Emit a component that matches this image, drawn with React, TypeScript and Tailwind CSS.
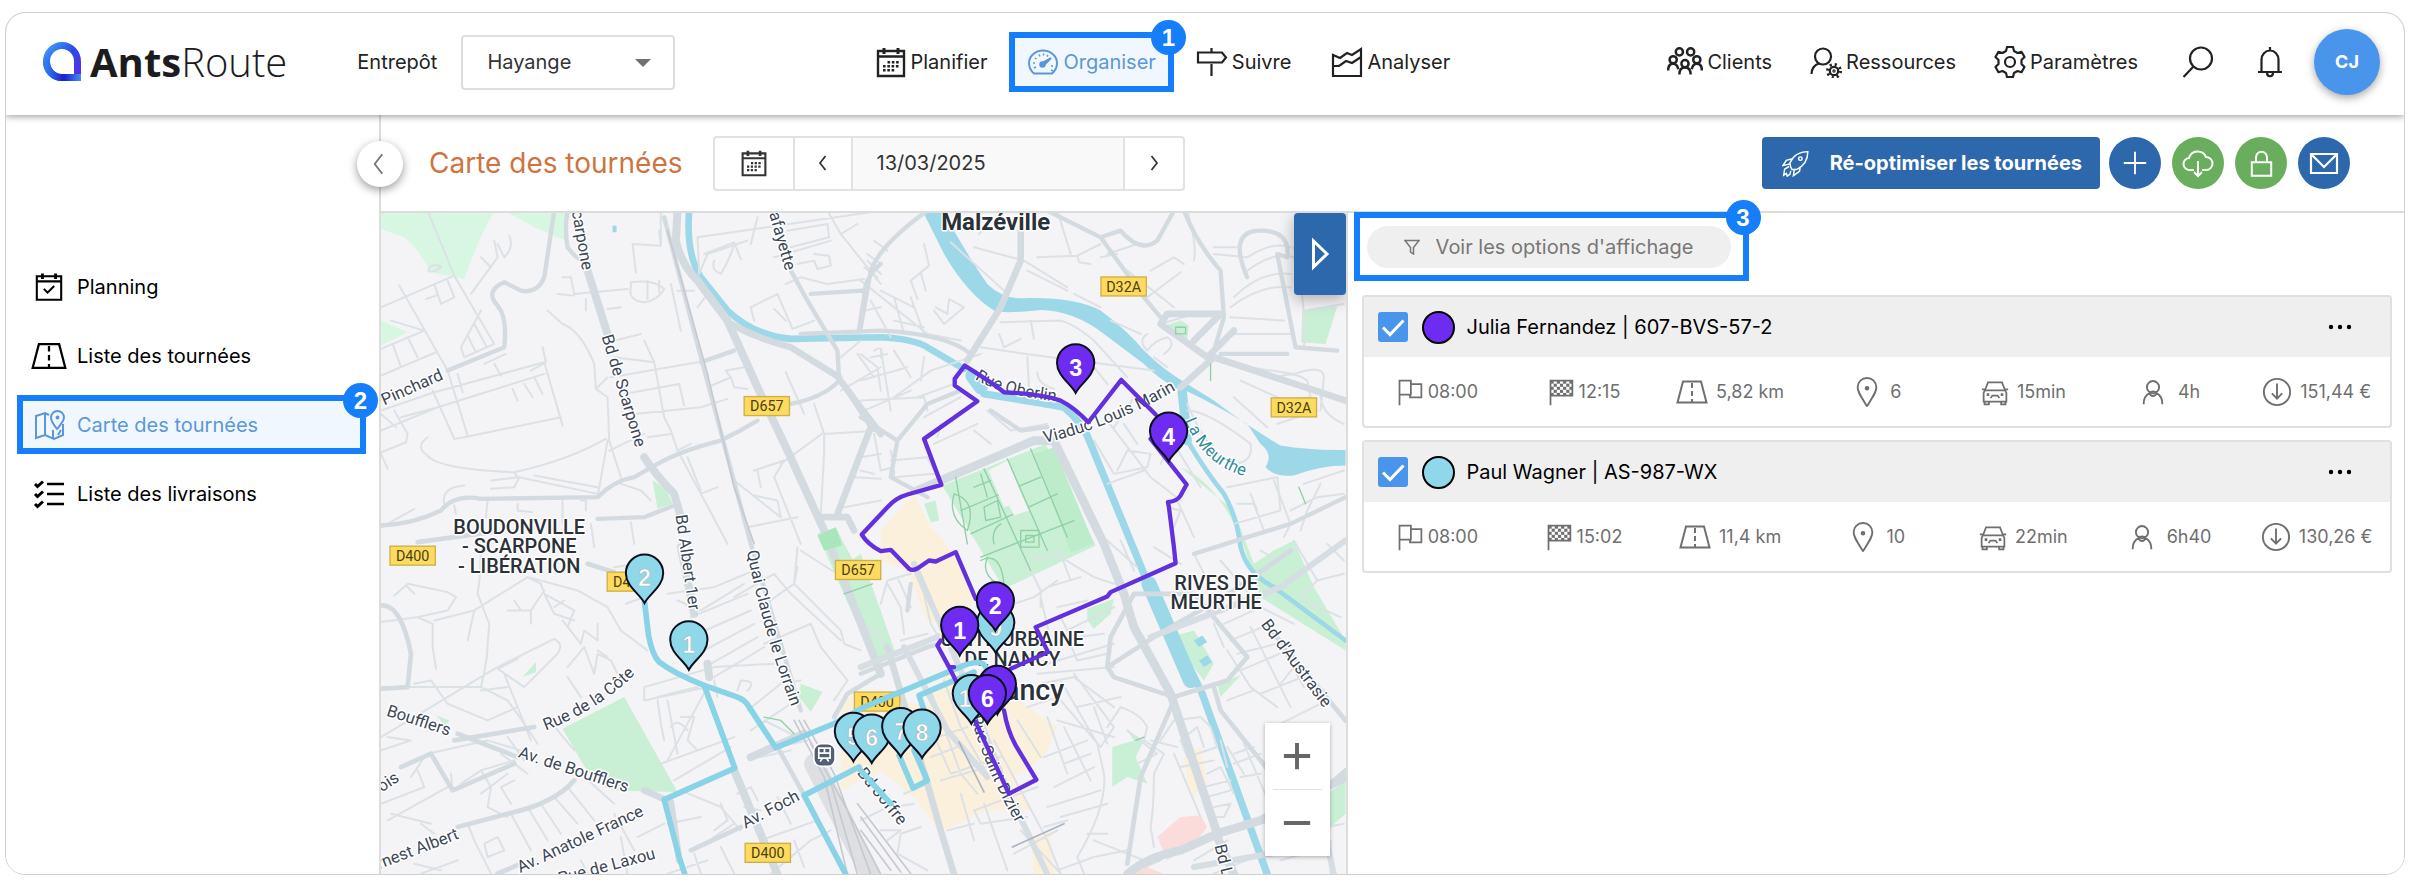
import React from "react";

type IconProps = { className?: string };

function Icon({ className = "", children, box = 32, width = 2 }: { className?: string; children: React.ReactNode; box?: number; width?: number }) {
  return (
    <svg viewBox={`0 0 ${box} ${box}`} className={`shrink-0 ${className}`} fill="none" stroke="currentColor" strokeWidth={width} aria-hidden="true">
      {children}
    </svg>
  );
}

function CalendarGridIcon({ className }: IconProps) {
  return (
    <Icon className={className}>
      <path d="M3 5h26v25H3zM3 10.500h26" strokeWidth="2.400" />
      <path d="M9 2v6M23 2v6" strokeWidth="3" />
      <path d="M12.500 16.200h13M8 20.200h17M8 24.200h12" strokeWidth="2.600" strokeDasharray="2.600 1.700" />
    </Icon>
  );
}

function GaugeIcon({ className }: IconProps) {
  return (
    <Icon className={className}>
      <path d="M7 27.500h18c3-2.500 5-6.500 5-10.500a14 12.500 0 0 0-28 0c0 4 2 8 5 10.500z" />
      <path d="M15 17l9-5-7 7z" fill="currentColor" />
      <circle cx="15.500" cy="18.500" r="2.200" fill="currentColor" />
      <path d="M6 17h2M24 20h2M7 22l2-1M24 24l2 1M8 12l1.500 1M12 8.500l1 2M16.500 7.500v2M21 9l-1 1.500" strokeWidth="1.500" />
    </Icon>
  );
}

function SignIcon({ className }: IconProps) {
  return (
    <Icon className={className} width={2.2}>
      <path d="M2 6.500h24l4 5-4 5H2zM15.500 2v4M15.500 18v12" />
    </Icon>
  );
}

function ChartIcon({ className }: IconProps) {
  return (
    <Icon className={className} width={2.2}>
      <path d="M2 9v21h28V3l-9 6-5-2-7 5zM2 20l6 0 7-5 6 2 9-6" />
    </Icon>
  );
}

function PeopleIcon({ className }: IconProps) {
  return (
    <Icon className={className} width={2.2}>
      <circle cx="11" cy="7" r="3.200" />
      <circle cx="21" cy="7" r="3.200" />
      <circle cx="5.500" cy="14" r="3.200" />
      <circle cx="26.500" cy="14" r="3.200" />
      <circle cx="16" cy="17.500" r="3.200" />
      <path d="M1 23.500c0-4 2-6 4.500-6s4 2 4.500 5M31 23.500c0-4-2-6-4.500-6s-4 2-4.500 5M11 27c0-4 2-6.200 5-6.200s5 2.200 5 6.200" />
    </Icon>
  );
}

function UserGearIcon({ className }: IconProps) {
  return (
    <Icon className={className} width={2.2}>
      <circle cx="13" cy="10.500" r="8" />
      <path d="M1.500 28c0-5 3-9.500 7.500-10.500" />
      <circle cx="24" cy="25" r="4.200" />
      <circle cx="24" cy="25" r="6.500" strokeDasharray="2.100 3" strokeWidth="3" />
      <circle cx="24" cy="25" r="0.600" />
    </Icon>
  );
}

function GearIcon({ className }: IconProps) {
  return (
    <Icon className={className} width={2.2}>
      <circle cx="16" cy="16" r="5" />
      <path strokeLinejoin="round" d="M13 1h6l1 4 3.500 2 4-1.200 3 5.200-3 3v4l3 3-3 5.200-4-1.200-3.500 2-1 4h-6l-1-4-3.500-2-4 1.200-3-5.200 3-3v-4l-3-3 3-5.200 4 1.200 3.500-2z" />
    </Icon>
  );
}

function SearchIcon({ className }: IconProps) {
  return (
    <Icon className={className} width={2.2}>
      <circle cx="19" cy="12.500" r="11" />
      <path d="M11.500 20.500L1.500 31" />
    </Icon>
  );
}

function BellIcon({ className }: IconProps) {
  return (
    <Icon className={className} width={2.2}>
      <path d="M4 26h24M7.500 26V13.500a8.500 9 0 0 1 17 0V26M16 1v3M13 26.500c0 5 6 5 6 0" />
    </Icon>
  );
}

function RocketIcon({ className }: IconProps) {
  return (
    <Icon className={className} width={1.7}>
      <path d="M10 21l-1-5C13 7 20 3 29.500 3c0 9-4 16-13 20.500l-5 0zM12 11l-7 2-4 6 8-2M21 19.500l-1 6-7 5 1-7M8 20l-5 3-1 7 3-2 1 3 3-2 1-4" />
      <circle cx="21" cy="11" r="2" />
    </Icon>
  );
}

function CloudIcon({ className }: IconProps) {
  return (
    <Icon className={className}>
      <path d="M12 23H8a6 6 0 0 1-1-12 9 9 0 0 1 17-1 6.500 6.500 0 0 1 0 13h-4M16 14v14M12 25l4 4 4-4" />
    </Icon>
  );
}

function LockIcon({ className }: IconProps) {
  return (
    <Icon className={className} width={2.4}>
      <path d="M4.500 14.500h23v16h-23zM9.500 14V9a6.500 7 0 0 1 13 0v5" />
    </Icon>
  );
}

function MailIcon({ className }: IconProps) {
  return (
    <Icon className={className} width={2.2}>
      <path d="M3 7h26v19H3zM3.500 7.500L16 20 28.500 7.500" />
    </Icon>
  );
}

function PlanningIcon({ className }: IconProps) {
  return (
    <Icon className={className} width={2.2}>
      <path d="M3 4.500h26v25H3zM3 10h26M10.500 18l4 4 7-7" />
      <path d="M9 1.500v6M23 1.500v6" strokeWidth="3" />
    </Icon>
  );
}

function RoadIcon({ className }: IconProps) {
  return (
    <Icon className={className}>
      <path d="M7 5.500h18l5.500 21h-29z" />
      <path d="M16 7v19" strokeDasharray="5 3" />
    </Icon>
  );
}

function MapPinIcon({ className }: IconProps) {
  return (
    <Icon className={className}>
      <path d="M16 6l-4-2-9 3v22l9-3 9 4 9-4V15M12 4v22M24 20c-4-5-6-8-6-11.500a6.500 6.500 0 0 1 13 0C31 12 28 15 24 20zM20 21v8M25 26l3-5" />
      <circle cx="24.500" cy="8.500" r="1" />
    </Icon>
  );
}

function ChecklistIcon({ className }: IconProps) {
  return (
    <Icon className={className} width={2.4}>
      <path d="M14 6h17M14 16h17M14 26h17" />
      <path d="M2 6l2.500 2.500L10 3.500M2 16l2.500 2.500L10 13.500M2 26l2.500 2.500L10 23.500" strokeWidth="3" />
    </Icon>
  );
}

function FlagIcon({ className }: IconProps) {
  return (
    <Icon className={className}>
      <path d="M4 31V3h13v16H4M17 7h12v15H16v-3" />
    </Icon>
  );
}

function FinishIcon({ className }: IconProps) {
  const cells: [number, number][] = [];
  for (let r = 0; r < 5; r++) for (let c = 0; c < 7; c++) if ((r + c) % 2 === 0) cells.push([c, r]);
  return (
    <Icon className={className}>
      <path d="M4 31V2M4 3h25v17H4" />
      {cells.map(([c, r]) => (
        <rect key={`${c}-${r}`} x={4 + c * 3.6} y={3 + r * 3.5} width="3.600" height="3.500" fill="currentColor" stroke="none" />
      ))}
    </Icon>
  );
}

function PlaceIcon({ className }: IconProps) {
  return (
    <Icon className={className}>
      <path d="M16 31C9 20 6 16 6 11a10 10 0 0 1 20 0c0 5-3 9-10 20z" />
      <circle cx="16" cy="12" r="1.500" fill="currentColor" />
    </Icon>
  );
}

function CarIcon({ className }: IconProps) {
  return (
    <Icon className={className}>
      <path d="M8 5h16l3.500 9H4.500zM1 13h4M27 13h4M4.500 14L3 17v10h26V17l-1.500-3M4 27v3h5v-3M23 27v3h5v-3M11 23l2-3h6l2 3" />
      <path d="M6.500 19h3M22.500 19h3" strokeWidth="3" />
    </Icon>
  );
}

function PersonIcon({ className }: IconProps) {
  return (
    <Icon className={className} width={2.3}>
      <circle cx="16" cy="10" r="7.500" />
      <path d="M4.500 31c0-7 3-11.500 7.500-13.500 1 4.500 7 4.500 8 0 4.500 2 7.500 6.500 7.500 13.500M11.500 17.500c2-3 7-3 9 0" />
    </Icon>
  );
}

function CostIcon({ className }: IconProps) {
  return (
    <Icon className={className}>
      <circle cx="16" cy="16" r="14" />
      <path d="M16 7v16M10.500 17.500L16 23l5.500-5.500" />
    </Icon>
  );
}

function Badge({ children }: { children: React.ReactNode }) {
  return (
    <span className="absolute -right-[18px] -top-[18px] z-10 flex h-[35px] w-[35px] items-center justify-center rounded-full bg-[#157efb] font-['Liberation_Sans',sans-serif] text-2xl font-bold text-white">
      {children}
    </span>
  );
}

function NavLink({ icon, label, badge }: { icon: React.ReactNode; label: string; badge?: string }) {
  return (
    <a
      href="#"
      className={`relative flex h-[60px] items-center gap-1 border-[6px] px-3 ${badge ? "border-[#157efb] bg-[#f0f7fe] text-[#5b97d8]" : "border-transparent"}`}
    >
      {icon}
      {label}
      {badge && <Badge>{badge}</Badge>}
    </a>
  );
}

function Header() {
  return (
    <header className="relative z-20 flex h-[102px] items-center justify-between rounded-t-[20px] bg-white pb-1 pl-9 pr-6 shadow-[0_2px_6px_rgba(0,0,0,0.35)]">
      <div className="flex items-center">
        <a href="#" className="flex items-center gap-2 font-['Open_Sans',sans-serif] text-[40px] leading-none text-[#1c1c1e]">
          <svg viewBox="0 0 40 40" className="h-10 w-10" aria-hidden="true">
            <defs>
              <linearGradient id="logo" x1="0" y1="0" x2="1" y2="1">
                <stop offset="0" stopColor="#3f9ff5" />
                <stop offset="0.500" stopColor="#2a4be8" />
                <stop offset="1" stopColor="#5a2be8" />
              </linearGradient>
              <linearGradient id="logoLow" x1="0" y1="0" x2="1" y2="0">
                <stop offset="0" stopColor="#2f7bf0" />
                <stop offset="0.500" stopColor="#1b1fd0" />
                <stop offset="1" stopColor="#4a8cf0" />
              </linearGradient>
            </defs>
            <path d="M35.500 35.500V19.500A15.500 16 0 1 0 20 35.500" fill="none" stroke="url(#logo)" strokeWidth="7" />
            <path d="M4.500 20A15.500 15.500 0 0 0 20 35.500H39" fill="none" stroke="url(#logoLow)" strokeWidth="7" />
          </svg>
          <span>
            <span className="font-bold">Ants</span>
            <span className="font-light">Route</span>
          </span>
        </a>
        <label htmlFor="depot" className="ml-[70px] mr-6">
          Entrepôt
        </label>
        <div className="relative">
          <select id="depot" className="h-[55px] w-[214px] appearance-none rounded border-2 border-[#dedede] bg-white pl-6 text-[#333]">
            <option>Hayange</option>
          </select>
          <svg viewBox="0 0 16 8" className="pointer-events-none absolute right-6 top-6 h-2 w-4" aria-hidden="true">
            <path d="M0 0h16L8 8z" fill="#707070" />
          </svg>
        </div>
      </div>
      <nav className="flex items-center gap-1">
        <NavLink icon={<CalendarGridIcon className="h-8 w-8" />} label="Planifier" />
        <NavLink icon={<GaugeIcon className="h-8 w-8" />} label="Organiser" badge="1" />
        <NavLink icon={<SignIcon className="h-8 w-8" />} label="Suivre" />
        <NavLink icon={<ChartIcon className="h-8 w-8" />} label="Analyser" />
      </nav>
      <div className="flex items-center gap-[2px]">
        <NavLink icon={<PeopleIcon className="h-9 w-9" />} label="Clients" />
        <NavLink icon={<UserGearIcon className="h-8 w-8" />} label="Ressources" />
        <NavLink icon={<GearIcon className="h-8 w-8" />} label="Paramètres" />
        <button aria-label="Rechercher" className="ml-6">
          <SearchIcon className="h-8 w-8" />
        </button>
        <button aria-label="Notifications" className="ml-[38px]">
          <BellIcon className="h-8 w-8" />
        </button>
        <button className="ml-[26px] h-[66px] w-[66px] rounded-full bg-[#4a95ec] text-lg font-bold text-white shadow-[0_3px_8px_rgba(0,0,0,0.35)]">CJ</button>
      </div>
    </header>
  );
}

function SideLink({ icon, label, badge }: { icon: React.ReactNode; label: string; badge?: string }) {
  return (
    <li>
      <a
        href="#"
        className={`relative flex h-[59px] items-center gap-[10px] border-[6px] pl-2 ${badge ? "border-[#157efb] bg-[#f0f7fe] text-[#5b97d8]" : "border-transparent text-black"}`}
      >
        <span className="flex w-9 justify-center">{icon}</span>
        {label}
        {badge && <Badge>{badge}</Badge>}
      </a>
    </li>
  );
}

function Sidebar() {
  return (
    <aside className="relative z-10 w-[375px] shrink-0 border-r-2 border-[#dcdcdc] bg-white pl-[11px] pr-[13px] pt-[142px]">
      <ul className="flex flex-col gap-[10px]">
        <SideLink icon={<PlanningIcon className="h-[30px] w-[30px]" />} label="Planning" />
        <SideLink icon={<RoadIcon className="h-9 w-9" />} label="Liste des tournées" />
        <SideLink icon={<MapPinIcon className="h-8 w-8" />} label="Carte des tournées" badge="2" />
        <SideLink icon={<ChecklistIcon className="h-8 w-8" />} label="Liste des livraisons" />
      </ul>
      <button
        aria-label="Replier le menu"
        className="absolute -right-6 top-[26px] flex h-[46px] w-[46px] items-center justify-center rounded-full bg-white text-[#777] shadow-[0_3px_10px_rgba(0,0,0,0.4)]"
      >
        <Icon className="h-6 w-6">
          <path d="M19 3L9 16l10 13" strokeWidth="2.500" />
        </Icon>
      </button>
    </aside>
  );
}

function RoundButton({ label, tone, children }: { label: string; tone: string; children: React.ReactNode }) {
  return (
    <button aria-label={label} className={`flex h-[52px] w-[52px] items-center justify-center rounded-full text-white ${tone}`}>
      {children}
    </button>
  );
}

function Toolbar() {
  return (
    <div className="flex h-[98px] items-center border-b-2 border-[#dcdcdc] pl-12 pr-[54px]">
      <h1 className="text-[28px] leading-none text-[#cf7340]">Carte des tournées</h1>
      <div className="ml-[30px] flex h-[55px] rounded border-2 border-[#e2e2e2] text-[#333]">
        <button aria-label="Ouvrir le calendrier" className="flex w-[78px] items-center justify-center">
          <CalendarGridIcon className="h-7 w-7" />
        </button>
        <button aria-label="Jour précédent" className="flex w-[60px] items-center justify-center border-x-2 border-[#e2e2e2]">
          <Icon className="h-4 w-4">
            <path d="M21 2L10 16l11 14" strokeWidth="3.500" />
          </Icon>
        </button>
        <input aria-label="Date" defaultValue="13/03/2025" className="w-[270px] bg-[#f9f9f9] px-6" />
        <button aria-label="Jour suivant" className="flex w-[60px] items-center justify-center border-l-2 border-[#e2e2e2]">
          <Icon className="h-4 w-4">
            <path d="M11 2l11 14-11 14" strokeWidth="3.500" />
          </Icon>
        </button>
      </div>
      <button className="ml-auto flex h-[52px] items-center gap-5 rounded bg-[#2e68ac] pl-5 pr-[18px] font-bold text-white">
        <RocketIcon className="h-7 w-7" />
        Ré-optimiser les tournées
      </button>
      <div className="ml-[9px] flex gap-[11px]">
        <RoundButton label="Ajouter" tone="bg-[#2e68ac]">
          <Icon className="h-6 w-6">
            <path d="M16 1v30M1 16h30" strokeWidth="2.500" />
          </Icon>
        </RoundButton>
        <RoundButton label="Télécharger" tone="bg-[#68ae5c]">
          <CloudIcon className="h-8 w-8" />
        </RoundButton>
        <RoundButton label="Verrouiller" tone="bg-[#68ae5c]">
          <LockIcon className="h-[27px] w-[27px]" />
        </RoundButton>
        <RoundButton label="Envoyer" tone="bg-[#2e68ac]">
          <MailIcon className="h-8 w-8" />
        </RoundButton>
      </div>
    </div>
  );
}

const ROAD = "#d3dbe1";
const MINOR = "#dce1e6";
const WATER = "#9dd8e9";
const PARK = "#c9efd5";

function Roads({ d, w, color = ROAD }: { d: string; w: number; color?: string }) {
  return <path d={d} fill="none" stroke={color} strokeWidth={w} strokeLinejoin="round" strokeLinecap="round" />;
}

function Shield({ x, y, label }: { x: number; y: number; label: string }) {
  return (
    <g>
      <rect x={x} y={y} width="136" height="57" fill="#fcdb5f" stroke="#cdb04a" strokeWidth="4" />
      <text x={x + 68} y={y + 44} textAnchor="middle" fontSize="43" fill="#4c3f12">
        {label}
      </text>
    </g>
  );
}

function StreetLabel({ x, y, angle, children, end = false }: { x: number; y: number; angle: number; children: string; end?: boolean }) {
  return (
    <text transform={`translate(${x} ${y}) rotate(${angle})`} textAnchor={end ? "end" : "start"}>
      {children}
    </text>
  );
}

function CurvedLabel({ id, d, color, children }: { id: string; d: string; color?: string; children: string }) {
  return (
    <>
      <path id={id} d={d} fill="none" stroke="none" />
      <text fill={color}>
        <textPath href={`#${id}`}>{children}</textPath>
      </text>
    </>
  );
}

function Pin({ x, y, label, color }: { x: number; y: number; label: string; color: "violet" | "sky" }) {
  return (
    <g transform={`translate(${x} ${y})`}>
      <path d="M0 90C-14 62 -56 40 -56 0A56 56 0 1 1 56 0C56 40 14 62 0 90Z" fill={color === "violet" ? "#6e2cf3" : "#8fd8ea"} stroke="#0b1020" strokeWidth="6" />
      <text textAnchor="middle" y="40" fontSize="70" fontWeight="700" fill="#fff" stroke={color === "violet" ? "none" : "#a9b8bd"} strokeWidth="2" fontFamily="Liberation Sans, sans-serif">
        {label}
      </text>
    </g>
  );
}

function MapCanvas() {
  return (
    <svg viewBox="0 6 2895 1986" preserveAspectRatio="xMidYMid slice" className="absolute inset-0 h-full w-full bg-[#f4f3f5]" fontFamily="Roboto, sans-serif" role="img" aria-label="Carte des tournées">
      {/* parks and built-up areas */}
      <path d="M0 0H340Q290 90 250 205L150 185Q110 110 70 80L0 55ZM370 0H555V90L460 50ZM0 330L80 365 0 405Z" fill="#d8f7e2" />
      <g fill={PARK}>
        <path d="M815 810Q860 830 875 880L830 895ZM1310 970L1365 950 1390 1000 1500 1200V1400L1380 1130Z" />
        <path d="M1685 825L1995 700 2145 1005 1870 1135Z" />
        <path d="M1960 730L2020 710 2140 1000 2070 1025Z" fill="#bdecca" />
        <path d="M2765 300L2870 288 2835 400 2762 395ZM2355 345L2400 330 2425 345 2420 385ZM1630 880L1665 870 1675 930 1650 935ZM2400 770Q2520 820 2590 1010L2640 1160 2895 1320 2895 1290 2800 1130 2740 990 2680 1020 2620 1060 2560 900Z" />
        <path d="M545 1555L730 1460 890 1745 700 1740Q640 1720 600 1650ZM425 1400L465 1355 465 1385ZM1260 1420L1325 1445 1290 1505 1255 1460ZM165 1515L205 1530 195 1545Z" />
        <path d="M1375 1075L1440 1030 1545 1330 1480 1370ZM2120 1195L2200 1165 2190 1210 2140 1255 2120 1230ZM2195 1610L2260 1590 2240 1560 2290 1590 2265 1640 2300 1720 2240 1700 2195 1730ZM2840 1750L2895 1710V1810L2840 1860ZM2510 1420L2580 1395 2520 1460ZM2370 1280L2440 1260 2500 1360 2470 1410Z" />
      </g>
      <g fill="#fbf0dc">
        <path d="M1500 960L1600 850 1650 950 1690 990 1780 1130 1760 1260 1640 1230 1580 1080 1500 1050ZM1380 1480L1440 1440 1640 1490 1700 1380 1860 1420 1940 1490 2030 1550 1990 1640 1900 1700 1950 1800 1820 1800 1680 1865 1600 1760 1500 1680 1380 1740ZM1950 1880L2010 1860 2020 1992H1960Z" />
        <path d="M2410 1640L2460 1610 2480 1720 2430 1760Z" />
      </g>
      <path d="M2330 1880L2400 1820 2460 1815 2480 1850 2440 1900 2360 1950ZM2250 1992L2300 1970 2350 1992Z" fill="#fbdcdb" />
      {/* water */}
      <path
        transform="translate(1440 0)"
        fill={WATER}
        d="M185 0H245Q330 150 380 220Q430 270 500 262Q650 260 720 300Q800 360 850 420Q910 480 980 520L1060 570Q1150 640 1260 705Q1350 720 1455 718V765Q1380 765 1300 795Q1240 800 1215 770Q1240 730 1200 700L1160 640Q1060 580 975 540L960 540Q900 510 850 460L730 370Q640 300 540 298Q430 310 400 300Q320 250 250 130Z"
      />
      <Roads color={WATER} w={20} d="M925 0Q915 130 960 200L1040 300Q1120 375 1230 385L1500 380Q1600 385 1640 410L1750 475" />
      <Roads color={WATER} w={42} d="M1775 495L1800 530" />
      <Roads color={WATER} w={22} d="M1810 550Q2000 580 2050 590Q2110 640 2130 700L2290 1090L2465 1450L2660 1992" />
      <Roads color={WATER} w={46} d="M2305 1120L2430 1410" />
      <Roads color={WATER} w={28} d="M2405 545L2420 690" />
      <Roads color={WATER} w={14} d="M2420 690Q2480 790 2530 850Q2570 920 2580 1010Q2600 1090 2680 1130L2895 1290" />
      <path d="M2440 1290l25-15 15 20-25 15zM2455 1350l25-15 15 20-25 15zM695 45h12v20h-12z" fill={WATER} />
      {/* residential streets */}
      <g transform="translate(0 0)">
        <Roads
          color={MINOR}
          w={6}
          d="M140 0L220 195L340 400M0 290L220 195M55 225L200 480L260 675M0 415L130 360L30 330M35 400L60 470M80 380L110 440M0 495L165 425M160 220L180 280L220 260L200 210M135 265L165 255M270 250L350 140L340 90M300 140L325 165M350 100L370 140Q400 110 385 75M300 300L240 410L250 440L340 400M280 340L315 405M260 375L285 425M150 165Q130 190 165 180Q200 160 150 165M0 600L160 545L490 455M0 660L170 590L490 490M155 540L220 685L250 680L540 620M490 455L545 645M230 490L245 545M395 535L410 570M430 520L455 560M460 500L485 550M310 460L375 430M340 460L360 495M450 480L495 455L485 410M0 610L45 650M40 600L80 670L75 695L0 725M0 730L20 775M60 620L170 590M140 680Q100 710 140 735Q170 775 400 785Q560 750 675 685M500 300L545 340Q600 360 640 460L645 535L680 560L685 690L720 800M645 535L680 500M570 200L580 250L740 235M545 200L570 200M530 250L580 255M615 265V300M680 295L720 290M700 390L780 370M750 230Q740 270 790 275Q830 270 850 235Q820 205 750 215ZM800 210V265M835 210V245M765 185L755 100L840 105L835 60M840 0L840 105M790 390L820 455L850 620L870 660L890 720L960 850L1040 1000M690 500L950 455M730 550L895 520L910 585M760 610L960 590L1040 565M800 680L870 670M685 720L790 670M700 440L820 455M650 860L680 690M460 795L650 830M400 785L410 800L330 810M330 835L400 830L415 800L650 850M190 880Q180 830 250 825M100 895L20 940M220 885L225 910M320 870L315 920M410 880V900L455 905M545 865V940M600 870H615V900M720 820L780 840L810 870M750 935L760 1000M630 940L640 1010M950 80L1500 0M950 80L955 190L980 130L1100 90M970 130L1060 95L1080 145M1000 150Q990 180 1020 190Q1050 140 1060 100M1220 60L1340 40L1345 80L1230 110M1180 140L1350 90M1250 160L1300 150L1310 175L1350 165L1345 135L1300 130M1215 220L1260 200L1340 220L1450 205M1130 20L1110 100M1110 290L1190 250L1235 355L1300 330M1110 290L1120 330M1180 295L1215 330M1340 0L1380 70L1500 220M1380 70L1430 40M1460 130L1500 160M1450 300L1500 290M980 530L1050 500L1035 480L1090 470M1050 500L1060 530L1100 535M1215 485L1270 610M1300 580L1330 670L1500 660M1330 670V730L1320 910M1200 760L1330 665M890 720L930 700M920 740L960 840M960 850L1010 830M1120 780L1210 750L1180 800L1260 1000M1130 780L1140 830M1060 810L1200 920L1190 870L1120 855M1100 950L1250 920M1390 890L1500 870M1380 540L1500 470M1380 440L1440 390M1430 430L1480 500M1480 420Q1510 400 1500 440M950 290L980 250L1000 290M870 220L900 360M890 240H940M1420 800L1500 805M1440 740L1500 730"
        />
      </g>
      <g transform="translate(1440 0)">
        <Roads
          color={MINOR}
          w={6}
          d="M0 210L200 370L300 390M40 90L80 120M20 150L60 190M10 170L50 200M30 270L90 380M60 240L160 290M100 260L130 370M100 330L190 350M150 260L190 370M150 210L205 165M205 165L190 100M150 210L170 265M180 185L195 240M270 95L430 240M220 300L250 340L310 290L265 265L260 310L225 290M340 110L490 150L620 230M355 70L390 30M530 140L650 135L720 100M650 135L655 155L690 160M590 0L630 130M500 180L620 240M360 410L530 435L880 480M510 330L520 385M415 370L430 410L480 385M420 335L600 330Q640 340 700 390L800 500M500 440L505 530M530 485Q530 520 580 535M660 420L740 520M750 330L840 370M640 250L720 290M720 140L770 130M800 180L940 290M870 180L940 140L970 160M860 260L960 185M740 130L830 100M980 0Q1010 100 1000 150M1060 110H1130M1060 130L1160 140M1160 140Q1240 90 1290 110M1160 180Q1240 120 1300 140M1120 260Q1200 180 1290 190M1110 290Q1200 220 1290 230M1150 80Q1190 40 1260 70M1300 110Q1340 300 1330 410M1110 320L1270 330M1110 370L1290 370M1330 300L1450 280M860 370Q830 390 860 420Q880 390 920 380Q950 400 910 430M900 340L1000 310L1080 320M880 440L920 470M1100 460L1300 490Q1390 460 1390 500L1380 600M1140 510L1250 560M1250 500Q1300 480 1340 510L1350 560L1260 570M1120 560L1220 650M1250 640L1370 600M1380 550Q1380 610 1450 640M820 560L760 650M790 640L830 700M740 630L870 800L960 870M700 690L760 790L860 770L870 730L800 720L770 780M740 820L850 780M880 610L940 700L1020 830M930 700L900 760M950 870L1000 980M920 890L960 900L940 950M980 600Q1040 600 1170 700Q1180 760 1110 760Q1040 720 980 580M1100 830L1250 800L1260 900L1120 940M1130 880L1180 880L1210 960M1170 850L1190 900M1240 810L1290 940L1270 980M1330 820L1450 780M1380 820L1340 900L1320 960M1290 900L1370 860L1450 850M0 430L50 470L60 540M30 440L80 430M60 415L90 600M100 420L150 500M0 510L140 470M100 560L210 480L360 430M0 570L190 560L200 600M10 600L150 540M170 560L280 520M190 440L180 510M40 670L60 780M60 780L100 770L90 720M90 750L200 740L220 780M100 780V800L220 790M190 620L300 560M220 700L350 640M0 780L40 790M240 640L230 680M380 600L450 660L560 640M340 660L390 700"
        />
      </g>
      <g transform="translate(0 990)">
        <Roads
          color={MINOR}
          w={6}
          d="M40 165L80 130L200 155L225 170L200 210L110 230M75 135L100 160M110 230L0 245M110 230L155 250V320L165 385M160 240L280 210L440 110L590 150L680 200L720 270L800 330M440 110L480 130L490 160L580 210L560 260M380 210L450 210L490 150M400 180L420 210M450 210V250M490 160L520 220L580 240M520 200L550 180M545 240L600 310L610 270L650 300V250M560 380L610 320L640 400L650 340L690 360L710 400M650 330L680 350M300 0Q300 100 290 160L325 250L320 310Q320 360 300 440L380 480L430 550L470 610M280 210L260 300M410 355L350 385L430 440L530 340Q550 310 520 295L340 385L0 590M0 440L150 440L300 440M100 430L150 420L200 490L320 540L410 500M300 450L380 440M370 400L430 550M430 550L450 600M0 630L90 600L20 590M140 640L320 600L420 630M90 710L130 650M0 790L130 740L110 690M20 840L200 740M30 820L150 850M120 850L160 880M210 700L215 750M240 730L300 690L330 740L320 800L380 830M300 760L380 700M400 720L360 740L390 790M120 1000L230 960M100 970L180 990M260 850L280 900L330 1000M310 910L350 890L370 930L320 950ZM390 820L450 930M440 800L500 900M480 790L540 880M520 770L590 850M560 740L640 840M600 700L700 790M700 820L760 930M720 890L740 1000M770 890L850 850M600 960L620 1000M300 690L400 660M440 700L360 640M380 590L430 660M560 410L600 470M580 630L530 570M530 570L500 530M700 80L770 70M735 190L790 170M860 160L1000 140L1120 90M890 180L960 210L1090 130M930 230L1100 160M950 280L1110 210M970 330L1120 250M990 370L1130 290M1000 410L1150 320M790 440L1000 380L1180 370M790 440V480L980 440M830 470L950 440M830 480L840 550L850 600M860 480L890 640M900 530L940 530L920 600L950 630M870 560Q890 530 920 570M980 440L860 660M1000 420L1010 470M1070 450L1080 420Q1130 420 1100 450M1100 510L1200 430L1260 420M1110 570L1230 490M1150 540L1250 590M1190 620L1280 600M1140 650L1230 630M840 670L1060 590M880 720L1050 620M1060 170L1180 100L1230 160L1380 300M1140 200L1240 130L1250 80M1250 20L1240 130L1380 270L1390 310L1440 330M1320 320L1400 420L1360 480M1260 30L1400 120M1150 310L1290 250L1320 320M860 850L960 830M940 930L1060 850M1000 870L1040 840L1020 790M900 750L1020 800L1080 870M1070 760L1110 740L1130 780M1090 800L1140 810M1190 770L1230 850M1140 900L1310 840M1170 1000L1290 900L1350 870M1240 900L1270 980M860 1000L980 960M940 940L960 1000M1020 920L1060 1000"
        />
      </g>
      <g transform="translate(1440 990)">
        <Roads
          color={MINOR}
          w={6}
          d="M60 190L80 120L150 100M80 130L120 200L130 280M110 110L150 200M160 90L190 160L210 250L240 300M120 300L200 280M60 300L90 330M0 250L60 290M430 200L520 170L590 120M490 50L540 150V200M540 170L570 300M510 60L600 40L630 120M600 50L700 110L760 130M560 140L660 110M590 200L680 180M600 230L620 270L760 200M570 300L730 280M620 290L650 360L740 340M560 370L760 310M530 400L760 380M540 430L640 410L760 500M600 420L710 610L730 700Q740 800 650 950L670 1000M640 400L760 560L720 620L600 480M650 500L780 470M590 540L760 590M610 560L690 720M700 500L740 610M560 530L620 700M550 650L680 600M610 670L690 640M580 740L700 680M560 800L720 750M600 830L740 790M680 880H740M740 560L780 500Q840 520 860 560L850 600L910 640L880 700Q880 800 870 860L880 920M800 570L890 640L830 670M870 600L950 620M900 600L940 540L1020 530L1050 560L1070 620L980 650L960 600L1010 560L1030 620M940 640L1020 830M960 680L1060 660M1040 700L1080 680L1120 760M1030 740L1110 720M1040 770L1110 750M1060 800L1110 790L1090 830L1060 830L1040 780M1080 600L1100 680M1120 640L1180 620M1120 670L1200 640M1140 710L1200 700M1100 620L1150 700M1150 610L1260 870M1090 250L1200 200L1300 250M1110 300L1230 250M1130 340L1250 310M1100 330L1170 440L1250 500M1140 390L1280 330M1200 460L1350 400M1170 260L1290 500M1220 240L1330 440M1260 430L1300 380L1390 450M1240 560L1400 480M1100 480L1180 450M1080 60L1200 200M1060 250L1090 320M1000 40L1030 100M960 70L880 20M830 80L740 0M780 0L820 90M1250 60L1200 30M1300 0L1370 120L1450 100M1370 120L1320 170M1400 10L1450 60M1330 180L1440 230M250 420L300 560L380 700M210 450L300 700L350 760M200 540L270 700L420 650M200 600L320 560M210 650L290 620M240 720L380 680M340 810L450 770L530 740M340 810L360 850L500 830M370 790L440 990M300 760L340 900M400 600L560 900L600 1000M470 540L540 650M500 500L590 470M180 860L120 880L110 940L200 990M60 870L120 870L80 900M100 800L160 790M130 760L200 730M0 840L80 800M260 870L340 850M460 940L590 870M480 870L600 1000M550 860L620 840M700 900L850 960M590 990L700 950L800 930M830 990L900 960M1000 960L1100 900M1060 1000L1180 950M1400 860L1450 850M1410 900V1000M1260 960L1400 920"
        />
      </g>
      {/* secondary streets */}
      <Roads
        w={13}
        d="M520 0L490 200Q470 250 420 240L370 215Q310 240 350 285Q380 320 370 410L200 480M0 945Q100 940 180 900Q220 850 300 865L650 860Q700 810 760 800L830 760Q900 720 1020 690Q1080 660 1130 630M1230 580Q1330 560 1375 510M960 455L1060 420M1290 250L1445 240M1500 160Q1450 200 1450 260L1435 355M650 925L790 920L880 885M560 0Q550 60 560 110Q590 150 610 150M850 20L960 440L1110 1000L1260 1500M1230 180L1280 270L1370 420L1375 505L1470 650L1370 910M1260 370L1500 360Q1700 370 1770 430M1640 0Q1500 100 1470 180L1440 350M1440 620L1550 690L1640 580L1740 540M1550 690L1530 800L1640 860M2000 0L2160 80L2290 260L2340 320M2160 80L2220 60Q2280 130 2330 90L2380 0M2410 0Q2450 100 2520 180L2530 320L2500 420M2600 200Q2540 60 2640 60Q2730 60 2720 140L2690 130L2745 410L2870 420M2520 430L2720 430M2440 1030L2730 940L2895 860M2600 980L2440 1030M1830 600L1920 660L2000 650M1590 1120L1580 1200M1440 1390L1640 1310L1740 1280"
      />
      <Roads
        w={14}
        d="M0 1185Q60 1180 90 1330L80 1430L0 1435M110 995L330 965M620 1060L700 1085M230 1570L410 1640M220 1590L460 1550M60 1670L150 1630L215 1740L400 1660M230 1850L380 1810Q520 1780 580 1710M930 1920L1080 1850M350 1990L420 1960M1500 1390L1400 1450L1360 1520M1190 1610L1290 1790L1395 1992M2180 1370L2320 1280L2560 1140L2730 1020M2180 1370L2200 1400L2380 1460L2540 1410L2600 1340L2440 1150L2260 1150L2190 1280L2180 1370M2500 1430L2520 1500L2680 1700M2380 1470L2280 1700L2240 1960M2895 1530L2680 1270M1940 1860L2000 1992M2895 1680L2780 1780L2680 1830"
      />
      {/* main roads */}
      <Roads w={24} d="M890 0L885 90Q900 160 950 210L1040 330L1130 530L1220 720L1330 960L1500 1390M620 180L680 370M790 740Q830 800 880 850L900 920M900 1010L940 1210M980 1360L985 1400M1060 1680L1190 1992M1110 1640L1270 1570" />
      <Roads w={20} d="M1040 335Q1130 385 1230 410L1375 500M1470 650L1370 910M1375 505L1500 670M1920 60V150L1860 290L1760 450M790 1740L870 1775L895 1950M1830 970M2440 390L2520 310L2360 310L2340 340L2480 440L2560 360M2400 530L2500 440L2895 570M1310 920L1400 920L1420 960M1520 1310L1640 1720L1680 1860L1720 1992" />
      <Roads w={26} d="M1610 840L1960 690H2020L2170 1000L2230 1150L2260 1250L2370 1450L2510 1870L2640 1830L2895 1700M2510 1870L2400 1920Q2300 1940 2240 1992M2510 1880L2560 1992" />
      <Roads w={18} d="M1820 1700L1700 1560L1570 1310M2000 1992L1880 1740L1740 1380L1600 1060M1440 1370L1720 1260M2840 1900L2860 1992M2440 1970L2840 1900M2310 1280L2700 1130L2895 990" color="#d6dde3" />
      <path d="M1310 975L1365 950 1385 1005 1330 1020Z" fill="#a9e6bb" />
      {/* railway */}
      <Roads w={60} color="#dedfe2" d="M1300 1660L1370 1800L1470 1992" />
      <Roads w={5} color="#c6cad0" d="M1240 1530L1330 1700L1400 1992M1255 1530L1345 1700L1430 1992M1270 1530L1360 1690L1470 1992M1290 1600L1400 1800L1500 1992M860 60L980 490L1060 830L1120 1000M1530 1980L1440 1860M1560 1985L1440 1820M1590 1990L1430 1780" />
      {/* park paths */}
      <Roads
        w={4}
        color="#8fd0a5"
        d="M1725 800L1760 1000M1810 775L1950 1080M1880 745L2000 1020M1950 715L2060 980M1740 900L1980 800M1770 970L2030 850M1800 1040L2080 930M1720 850Q1790 870 1760 960Q1700 920 1720 850M1780 830L1830 810M1800 790L1820 860M1920 960H1975V1010H1920ZM1935 975H1960V995H1935ZM1840 1000Q1830 960 1860 940M1800 1050Q1860 1020 1870 1120M1820 1040Q1800 1090 1850 1120M1810 890L1850 870L1860 920L1815 930ZM1390 1150L1475 1120M2385 350H2415V370H2385ZM2755 830L2775 880M1150 1520L1200 1530L1240 1570M2490 460V510M2265 1590L2290 1580"
      />
      <Roads w={5} color="#a9b4c3" d="M1735 1595L1810 1745M1895 1910L2050 1840" />
      <path d="M1823 780L1880 750 1930 870 1870 890ZM1885 885L1930 870 1945 900 1900 915Z" fill="#f4f3f5" />
      {/* road numbers */}
      <Shield x={1090} y={558} label="D657" />
      <Shield x={2161} y={199} label="D32A" />
      <Shield x={2672} y={562} label="D32A" />
      <Shield x={27} y={1007} label="D400" />
      <Shield x={679} y={1085} label="D400" />
      <Shield x={1364} y={1050} label="D657" />
      <Shield x={1421} y={1445} label="D400" />
      <Shield x={1093} y={1899} label="D400" />
      {/* labels */}
      <g fontSize="50" fill="#3b4757" stroke="#fff" strokeWidth="9" strokeLinejoin="round" paintOrder="stroke">
        <StreetLabel x={604} y={180} angle={80} end>Scarpone</StreetLabel>
        <StreetLabel x={1214} y={182} angle={74} end>Lafayette</StreetLabel>
        <StreetLabel x={662} y={378} angle={73}>Bd de Scarpone</StreetLabel>
        <StreetLabel x={10} y={585} angle={-24}>Pinchard</StreetLabel>
        <StreetLabel x={884} y={914} angle={82}>Bd Albert 1er</StreetLabel>
        <CurvedLabel id="s-oberlin" d="M1782 505Q1870 560 2080 578">Rue Oberlin</CurvedLabel>
        <CurvedLabel id="s-marin" d="M1992 697Q2220 645 2450 500">Viaduc Louis Marin</CurvedLabel>
        <CurvedLabel id="s-meurthe" d="M2413 630Q2480 800 2680 812" color="#2d8a9d">La Meurthe</CurvedLabel>
        <CurvedLabel id="s-quai" d="M1098 1022Q1150 1290 1260 1560">Quai Claude le Lorrain</CurvedLabel>
        <CurvedLabel id="s-cote" d="M494 1560Q680 1490 800 1350">Rue de la Côte</CurvedLabel>
        <StreetLabel x={14} y={1515} angle={18}>Boufflers</StreetLabel>
        <StreetLabel x={410} y={1640} angle={18}>Av. de Boufflers</StreetLabel>
        <StreetLabel x={58} y={1710} angle={-33} end>bois</StreetLabel>
        <StreetLabel x={236} y={1884} angle={-21} end>Ernest Albert</StreetLabel>
        <StreetLabel x={418} y={1988} angle={-25}>Av. Anatole France</StreetLabel>
        <StreetLabel x={826} y={1944} angle={-15} end>Rue de Laxou</StreetLabel>
        <StreetLabel x={1094} y={1855} angle={-28}>Av. Foch</StreetLabel>
        <StreetLabel x={1427} y={1688} angle={51}>Bd Joffre</StreetLabel>
        <CurvedLabel id="s-dizier" d="M1770 1520Q1820 1700 1930 1880">Rue Saint Dizier</CurvedLabel>
        <StreetLabel x={2640} y={1242} angle={53}>Bd d&apos;Austrasie</StreetLabel>
        <StreetLabel x={2502} y={1906} angle={76}>Bd Lobau</StreetLabel>
        <g fontSize="60" fontWeight="500" fill="#2b3138" textAnchor="middle">
          <text x="415" y="970">BOUDONVILLE</text>
          <text x="415" y="1028">- SCARPONE</text>
          <text x="415" y="1088">- LIBÉRATION</text>
          <text x="2507" y="1138">RIVES DE</text>
          <text x="2507" y="1197">MEURTHE</text>
          <text x="1895" y="1308">UNITÉ URBAINE</text>
          <text x="1895" y="1367">DE NANCY</text>
          <text x="1845" y="58" fontSize="72" fontWeight="700">Malzéville</text>
          <text x="1930" y="1470" fontSize="86">Nancy</text>
        </g>
      </g>
      {/* delivery rounds */}
      <Roads
        color="#88d3e6"
        w={17}
        d="M791 1175L803 1275Q815 1335 835 1355Q880 1390 970 1425L1070 1460Q1095 1470 1105 1490L1185 1612L1360 1540L1450 1490L1750 1365Q1805 1345 1815 1370M970 1425L1062 1673L850 1768L895 1940L912 1992M1435 1670L1270 1755L1395 1992M1435 1675L1530 1780M1780 1385L1615 1455L1640 1530M1555 1635L1597 1733L1640 1710L1600 1620"
      />
      <g transform="translate(1440 0)">
        <Roads
          color="#6230dd"
          w={13}
          d="M345 1165L285 1025L225 1053L205 1050L170 1074Q155 1082 145 1075L90 1018L60 1022Q20 1000 3 972L80 890Q105 862 140 852L242 823L190 685L350 572L282 525V505L312 465Q400 520 430 545Q540 550 600 570Q640 590 683 635L782 508L885 612M870 685L925 755L978 822L960 855Q950 872 922 875L925 890L940 1010L945 1058L750 1145L740 1158L525 1250L562 1325L450 1375M240 1290L230 1305L265 1370H280M265 1370L290 1420M345 1535L370 1590L445 1750L527 1708L465 1605Q440 1560 430 1500"
        />
      </g>
      {/* station */}
      <rect x="1299" y="1600" width="64" height="68" rx="22" fill="#536074" stroke="#fff" strokeWidth="5" />
      <path d="M1314 1613h34v30h-34zM1318 1653l6-8M1344 1653l-6-8M1314 1628h34M1331 1613v15" fill="none" stroke="#fff" strokeWidth="5" />
      {/* stops */}
      <Pin x={791} y={1088} label="2" color="sky" />
      <Pin x={924} y={1288} label="1" color="sky" />
      <Pin x={1418} y={1563} label="5" color="sky" />
      <Pin x={1473} y={1568} label="6" color="sky" />
      <Pin x={1560} y={1549} label="7" color="sky" />
      <Pin x={1624} y={1553} label="8" color="sky" />
      <Pin x={1845} y={1237} label="9" color="sky" />
      <Pin x={1737} y={1245} label="1" color="violet" />
      <Pin x={1844} y={1171} label="2" color="violet" />
      <Pin x={2085} y={457} label="3" color="violet" />
      <Pin x={2364} y={662} label="4" color="violet" />
      <Pin x={1850} y={1422} label="5" color="violet" />
      <Pin x={1772} y={1450} label="10" color="sky" />
      <Pin x={1820} y={1450} label="6" color="violet" />
    </svg>
  );
}

function MapPane() {
  return (
    <section className="relative min-w-0 flex-[965] overflow-hidden border-r-2 border-[#dcdcdc]">
      <MapCanvas />
      <button aria-label="Réduire la carte" className="absolute right-0 top-0 flex h-[82px] w-[52px] items-center justify-center rounded bg-[#2e68ac] text-white shadow-[0_4px_16px_rgba(0,0,0,0.3)]">
        <svg viewBox="0 0 20 36" className="h-9 w-5" fill="none" stroke="currentColor" strokeWidth="3" aria-hidden="true">
          <path d="M3.500 5v26L17 18z" />
        </svg>
      </button>
      <div className="absolute bottom-[18px] right-4 flex h-[133px] w-[65px] flex-col bg-white text-[#666] shadow-[0_1px_4px_rgba(0,0,0,0.3)]">
        <button aria-label="Zoom avant" className="flex flex-1 items-center justify-center">
          <Icon className="h-7 w-7">
            <path d="M16 1v30M1 16h30" strokeWidth="4.500" />
          </Icon>
        </button>
        <span className="mx-2 h-px bg-[#e2e2e2]" />
        <button aria-label="Zoom arrière" className="flex flex-1 items-center justify-center">
          <Icon className="h-7 w-7">
            <path d="M1 16h30" strokeWidth="4.500" />
          </Icon>
        </button>
      </div>
    </section>
  );
}

type Round = { id: string; name: string; dot: string; values: string[] };

const rounds: Round[] = [
  { id: "julia", name: "Julia Fernandez | 607-BVS-57-2", dot: "bg-[#6e2cf3]", values: ["08:00", "12:15", "5,82 km", "6", "15min", "4h", "151,44 €"] },
  { id: "paul", name: "Paul Wagner | AS-987-WX", dot: "bg-[#8fd8ea]", values: ["08:00", "15:02", "11,4 km", "10", "22min", "6h40", "130,26 €"] },
];

const metrics = [
  { Glyph: FlagIcon, size: "h-7 w-7", gap: "gap-1" },
  { Glyph: FinishIcon, size: "h-7 w-7", gap: "gap-1" },
  { Glyph: RoadIcon, size: "h-8 w-8", gap: "gap-2" },
  { Glyph: PlaceIcon, size: "h-[30px] w-[30px]", gap: "gap-2" },
  { Glyph: CarIcon, size: "h-7 w-7", gap: "gap-2" },
  { Glyph: PersonIcon, size: "h-[26px] w-[26px]", gap: "gap-3" },
  { Glyph: CostIcon, size: "h-[30px] w-[30px]", gap: "gap-2" },
];

function RoundCard({ round }: { round: Round }) {
  return (
    <article className="rounded-sm border-2 border-[#e0e0e0] bg-white">
      <div className="flex h-[60px] items-center bg-[#efefef] pl-[14px] pr-9 text-black">
        <span className="relative h-[30px] w-[30px]">
          <input id={round.id} type="checkbox" defaultChecked className="h-[30px] w-[30px] appearance-none rounded-[3px] border-2 border-[#4a95ec] checked:bg-[#4a95ec]" />
          <svg viewBox="0 0 30 30" className="pointer-events-none absolute inset-0 h-[30px] w-[30px]" fill="none" stroke="#fff" strokeWidth="3" aria-hidden="true">
            <path d="M5 15.500l7 7L25.500 8.500" />
          </svg>
        </span>
        <span className={`ml-[14px] h-[33px] w-[33px] rounded-full border-2 border-black ${round.dot}`} />
        <label htmlFor={round.id} className="ml-3">
          {round.name}
        </label>
        <button aria-label="Plus d'actions" className="ml-auto">
          <svg viewBox="0 0 28 8" className="h-2 w-7" fill="currentColor" aria-hidden="true">
            <circle cx="5" cy="4" r="2.200" />
            <circle cx="14" cy="4" r="2.200" />
            <circle cx="23" cy="4" r="2.200" />
          </svg>
        </button>
      </div>
      <ul className="grid h-[69px] grid-cols-7 text-lg text-[#6f6f6f]">
        {metrics.map(({ Glyph, size, gap }, i) => (
          <li key={i} className={`flex items-center justify-center ${gap}`}>
            <Glyph className={size} />
            {round.values[i]}
          </li>
        ))}
      </ul>
    </article>
  );
}

function RoundsPanel() {
  return (
    <section className="flex min-w-0 flex-[1031] flex-col bg-white pl-[14px] pr-3">
      <div className="relative -ml-2 -mt-px self-start border-[6px] border-[#157efb] bg-white pb-[7px] pl-[7px] pr-3 pt-2">
        <button className="flex h-[42px] w-[364px] items-center justify-center gap-4 rounded-full bg-[#efefef] text-[#777]">
          <Icon className="h-4 w-4">
            <path d="M2 3h28L19 17v13l-6-4V17z" strokeWidth="3" />
          </Icon>
          Voir les options d&apos;affichage
        </button>
        <Badge>3</Badge>
      </div>
      <div className="mt-[14px] flex flex-col gap-3">
        {rounds.map((r) => (
          <RoundCard key={r.id} round={r} />
        ))}
      </div>
    </section>
  );
}

export default function App() {
  return (
    <div className="flex min-h-screen flex-col bg-white px-[5px] py-3 font-['Inter',sans-serif] text-xl text-[#222]">
      <div className="flex flex-1 flex-col overflow-hidden rounded-[20px] border border-[#d0d0d0]">
        <Header />
        <div className="flex flex-1">
          <Sidebar />
          <main className="flex min-w-0 flex-1 flex-col">
            <Toolbar />
            <div className="flex flex-1">
              <MapPane />
              <RoundsPanel />
            </div>
          </main>
        </div>
      </div>
    </div>
  );
}
